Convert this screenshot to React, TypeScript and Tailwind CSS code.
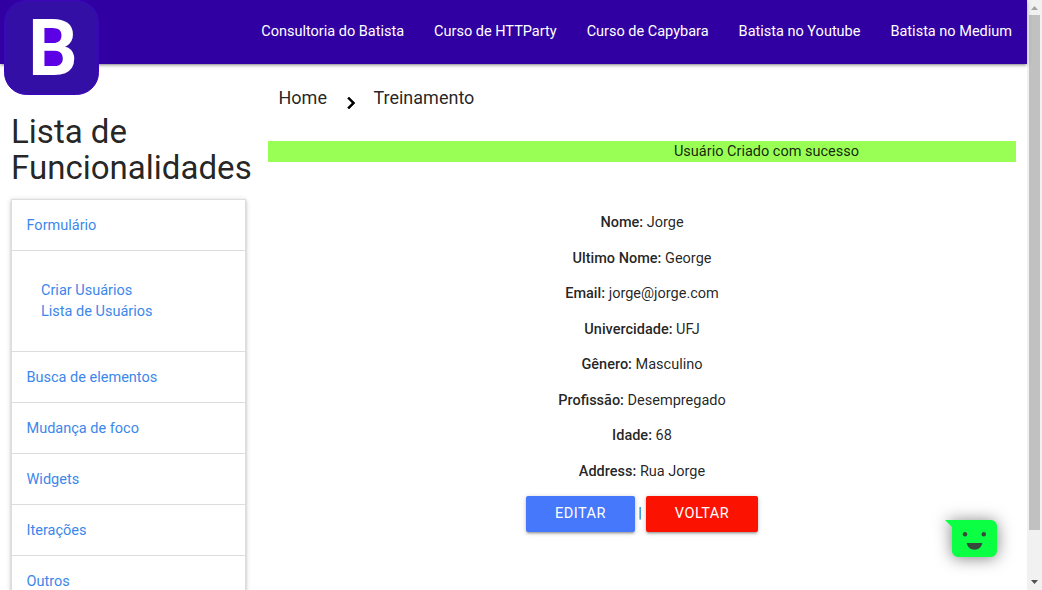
import React from "react";

const navLinks = [
  "Consultoria do Batista",
  "Curso de HTTParty",
  "Curso de Capybara",
  "Batista no Youtube",
  "Batista no Medium",
];

const sections = ["Busca de elementos", "Mudança de foco", "Widgets", "Iterações", "Outros"];

const user = [
  ["Nome:", "Jorge"],
  ["Ultimo Nome:", "George"],
  ["Email:", "jorge@jorge.com"],
  ["Univercidade:", "UFJ"],
  ["Gênero:", "Masculino"],
  ["Profissão:", "Desempregado"],
  ["Idade:", "68"],
  ["Address:", "Rua Jorge"],
];

function Logo() {
  return (
    <svg className="absolute left-1 top-0" width="95" height="95" viewBox="0 0 95 95">
      <rect x="0.5" y="0.5" width="94" height="94" rx="22" fill="#330fa6" stroke="#3d06bd" />
      <rect x="38" y="28" width="20" height="38" fill="#5c00e6" />
      <text x="24" y="75" fontFamily="Roboto, sans-serif" fontWeight="700" fontSize="78" fill="#fff">
        B
      </text>
    </svg>
  );
}

function Navbar() {
  return (
    <nav className="relative z-10 flex h-16 shrink-0 justify-end bg-[#3100a2] shadow-[0_2px_2px_0_rgba(0,0,0,0.14),0_3px_1px_-2px_rgba(0,0,0,0.12),0_1px_5px_0_rgba(0,0,0,0.2)]">
      <Logo />
      <ul className="flex text-white">
        {navLinks.map((link) => (
          <li key={link} className="px-[15px] leading-[64px]">
            <a href="#">{link}</a>
          </li>
        ))}
      </ul>
    </nav>
  );
}

function Sidebar() {
  return (
    <aside className="w-[257px] shrink-0 pl-[11px] pt-[50px]">
      <h4 className="text-[33.06px] leading-9">Lista de Funcionalidades</h4>
      <ul className="mt-[13px] w-[235px] border border-b-0 border-[#ddd] text-[#3c87eb] shadow-[0_2px_2px_0_rgba(0,0,0,0.14),0_3px_1px_-2px_rgba(0,0,0,0.12),0_1px_5px_0_rgba(0,0,0,0.2)]">
        <li className="border-b border-[#ddd]">
          <div className="h-[51px] border-b border-[#ddd] px-[14.5px] pt-[14.5px]">Formulário</div>
          <div className="flex h-[100px] flex-col px-[29px] pt-[29px]">
            <a href="#">Criar Usuários</a>
            <a href="#">Lista de Usuários</a>
          </div>
        </li>
        {sections.map((section) => (
          <li key={section} className="h-[51px] border-b border-[#ddd] px-[14.5px] pt-[14.5px]">
            {section}
          </li>
        ))}
      </ul>
    </aside>
  );
}

function Content() {
  return (
    <main className="ml-[11px] flex w-[748px] flex-col">
      <div className="flex h-[77px] items-start pl-[10.5px] pt-5 text-lg leading-[27px]">
        <a href="#">Home</a>
        <svg className="ml-3 mr-[10.5px] mt-[6.5px]" width="24" height="24" viewBox="0 0 24 24" fill="#000" stroke="#000" strokeWidth="0.6">
          <path d="M10 6 8.59 7.41 13.17 12l-4.58 4.59L10 18l6-6z" />
        </svg>
        <a href="#">Treinamento</a>
      </div>
      <p className="h-[21px] bg-[#99ff55] pl-[249px] text-center">Usuário Criado com sucesso</p>
      <div className="mt-[50px] flex flex-col gap-[14.5px] text-center">
        {user.map(([label, value]) => (
          <p key={label}>
            <strong className="font-medium">{label}</strong> {value}
          </p>
        ))}
      </div>
      <div className="mt-[14.5px] flex items-center justify-center text-[#039be5]">
        <a href="#" className="flex h-9 w-[109px] justify-center rounded-xs bg-[#4678fb] leading-9 tracking-[0.5px] text-white shadow-[0_2px_2px_0_rgba(0,0,0,0.14),0_3px_1px_-2px_rgba(0,0,0,0.12),0_1px_5px_0_rgba(0,0,0,0.2)]">
          EDITAR
        </a>
        <span className="w-[11px] pb-px pr-px text-center font-medium text-[#2b6a9c]">|</span>
        <a href="#" className="flex h-9 w-28 justify-center rounded-xs bg-[#fb1200] leading-9 tracking-[0.5px] text-white shadow-[0_2px_2px_0_rgba(0,0,0,0.14),0_3px_1px_-2px_rgba(0,0,0,0.12),0_1px_5px_0_rgba(0,0,0,0.2)]">
          VOLTAR
        </a>
      </div>
    </main>
  );
}

function ChatBubble() {
  return (
    <svg
      className="absolute left-[945px] top-[519px] z-20 overflow-visible drop-shadow-[0_1px_8px_rgba(0,0,0,0.5)]"
      width="52"
      height="38"
      viewBox="0 0 52 38"
    >
      <path d="M0 1h46a6 6 0 0 1 6 6v25a6 6 0 0 1-6 6H13a6 6 0 0 1-6-6V8z" fill="#0bff43" />
      <circle cx="20" cy="15.2" r="2.2" fill="#37473b" />
      <circle cx="38.8" cy="15.2" r="2.2" fill="#37473b" />
      <path d="M21.700 24h15.600c-.7 4-3.800 6.700-7.800 6.700S22.400 28 21.700 24z" fill="#37473b" />
    </svg>
  );
}

function Scrollbar() {
  return (
    <div className="flex w-[15px] shrink-0 flex-col items-center bg-[#f1f1f1]">
      <svg width="15" height="15" viewBox="0 0 15 15" fill="#a3a3a3">
        <path d="M4 10 7.500 6 11 10z" />
      </svg>
      <div className="h-[515px] w-[11px] bg-[#c1c1c1]" />
      <svg className="mt-auto" width="15" height="15" viewBox="0 0 15 15" fill="#505050">
        <path d="M4 5h7L7.500 9z" />
      </svg>
    </div>
  );
}

export default function App() {
  return (
    <div className="relative flex h-[590px] w-[1042px] overflow-hidden bg-white font-['Roboto',sans-serif] text-[14.5px] leading-[21px] text-[rgba(0,0,0,0.87)]">
      <div className="flex w-[1027px] shrink-0 flex-col">
        <Navbar />
        <div className="flex">
          <Sidebar />
          <Content />
        </div>
      </div>
      <ChatBubble />
      <Scrollbar />
    </div>
  );
}
